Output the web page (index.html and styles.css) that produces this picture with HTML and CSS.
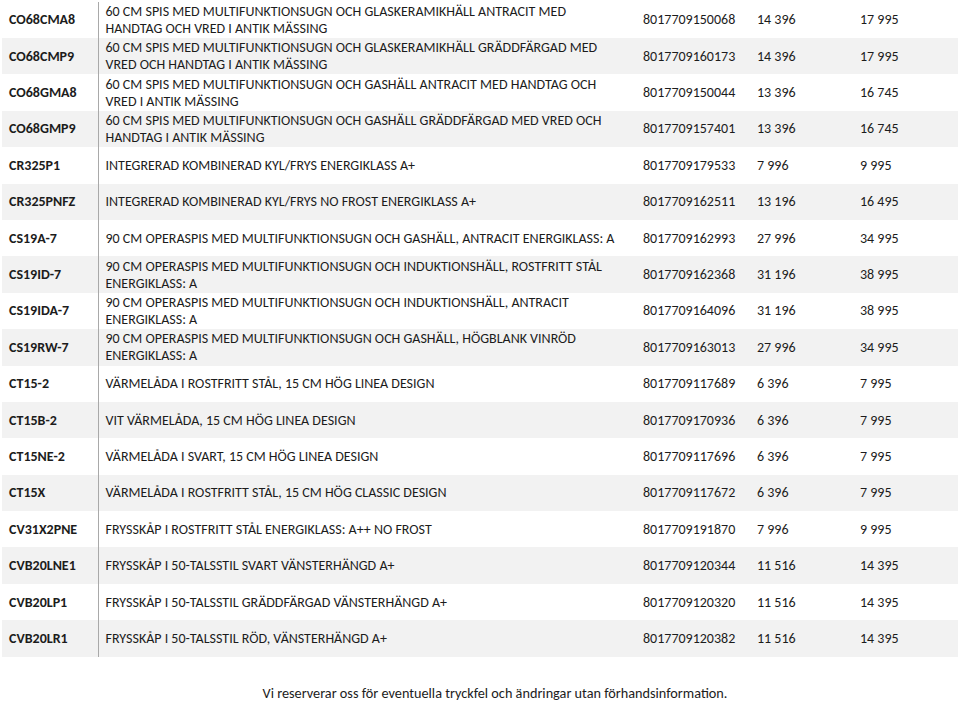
FILE: index.html
```html
<!DOCTYPE html>
<html lang="sv">
<head>
<meta charset="utf-8">
<title>Prislista</title>
<link rel="stylesheet" href="styles.css">
</head>
<body>
<div class="page">
<table class="list">
<colgroup>
<col class="c-code"><col class="c-desc"><col class="c-ean"><col class="c-cost"><col class="c-price">
</colgroup>
<tbody>
<tr><td class="code">CO68CMA8</td><td class="desc">60 CM SPIS MED MULTIFUNKTIONSUGN OCH GLASKERAMIKHÄLL ANTRACIT MED<br>HANDTAG OCH VRED I ANTIK MÄSSING</td><td>8017709150068</td><td>14 396</td><td>17 995</td></tr>
<tr><td class="code">CO68CMP9</td><td class="desc">60 CM SPIS MED MULTIFUNKTIONSUGN OCH GLASKERAMIKHÄLL GRÄDDFÄRGAD MED<br>VRED OCH HANDTAG I ANTIK MÄSSING</td><td>8017709160173</td><td>14 396</td><td>17 995</td></tr>
<tr><td class="code">CO68GMA8</td><td class="desc">60 CM SPIS MED MULTIFUNKTIONSUGN OCH GASHÄLL ANTRACIT MED HANDTAG OCH<br>VRED I ANTIK MÄSSING</td><td>8017709150044</td><td>13 396</td><td>16 745</td></tr>
<tr><td class="code">CO68GMP9</td><td class="desc">60 CM SPIS MED MULTIFUNKTIONSUGN OCH GASHÄLL GRÄDDFÄRGAD MED VRED OCH<br>HANDTAG I ANTIK MÄSSING</td><td>8017709157401</td><td>13 396</td><td>16 745</td></tr>
<tr><td class="code">CR325P1</td><td class="desc">INTEGRERAD KOMBINERAD KYL/FRYS ENERGIKLASS A+</td><td>8017709179533</td><td>7 996</td><td>9 995</td></tr>
<tr><td class="code">CR325PNFZ</td><td class="desc">INTEGRERAD KOMBINERAD KYL/FRYS NO FROST ENERGIKLASS A+</td><td>8017709162511</td><td>13 196</td><td>16 495</td></tr>
<tr><td class="code">CS19A-7</td><td class="desc">90 CM OPERASPIS MED MULTIFUNKTIONSUGN OCH GASHÄLL, ANTRACIT ENERGIKLASS: A</td><td>8017709162993</td><td>27 996</td><td>34 995</td></tr>
<tr><td class="code">CS19ID-7</td><td class="desc">90 CM OPERASPIS MED MULTIFUNKTIONSUGN OCH INDUKTIONSHÄLL, ROSTFRITT STÅL<br>ENERGIKLASS: A</td><td>8017709162368</td><td>31 196</td><td>38 995</td></tr>
<tr><td class="code">CS19IDA-7</td><td class="desc">90 CM OPERASPIS MED MULTIFUNKTIONSUGN OCH INDUKTIONSHÄLL, ANTRACIT<br>ENERGIKLASS: A</td><td>8017709164096</td><td>31 196</td><td>38 995</td></tr>
<tr><td class="code">CS19RW-7</td><td class="desc">90 CM OPERASPIS MED MULTIFUNKTIONSUGN OCH GASHÄLL, HÖGBLANK VINRÖD<br>ENERGIKLASS: A</td><td>8017709163013</td><td>27 996</td><td>34 995</td></tr>
<tr><td class="code">CT15-2</td><td class="desc">VÄRMELÅDA I ROSTFRITT STÅL, 15 CM HÖG LINEA DESIGN</td><td>8017709117689</td><td>6 396</td><td>7 995</td></tr>
<tr><td class="code">CT15B-2</td><td class="desc">VIT VÄRMELÅDA, 15 CM HÖG LINEA DESIGN</td><td>8017709170936</td><td>6 396</td><td>7 995</td></tr>
<tr><td class="code">CT15NE-2</td><td class="desc">VÄRMELÅDA I SVART, 15 CM HÖG LINEA DESIGN</td><td>8017709117696</td><td>6 396</td><td>7 995</td></tr>
<tr><td class="code">CT15X</td><td class="desc">VÄRMELÅDA I ROSTFRITT STÅL, 15 CM HÖG CLASSIC DESIGN</td><td>8017709117672</td><td>6 396</td><td>7 995</td></tr>
<tr><td class="code">CV31X2PNE</td><td class="desc">FRYSSKÅP I ROSTFRITT STÅL ENERGIKLASS: A++ NO FROST</td><td>8017709191870</td><td>7 996</td><td>9 995</td></tr>
<tr><td class="code">CVB20LNE1</td><td class="desc">FRYSSKÅP I 50-TALSSTIL SVART VÄNSTERHÄNGD A+</td><td>8017709120344</td><td>11 516</td><td>14 395</td></tr>
<tr><td class="code">CVB20LP1</td><td class="desc">FRYSSKÅP I 50-TALSSTIL GRÄDDFÄRGAD VÄNSTERHÄNGD A+</td><td>8017709120320</td><td>11 516</td><td>14 395</td></tr>
<tr><td class="code">CVB20LR1</td><td class="desc">FRYSSKÅP I 50-TALSSTIL RÖD, VÄNSTERHÄNGD A+</td><td>8017709120382</td><td>11 516</td><td>14 395</td></tr>
</tbody>
</table>
<p class="note">Vi reserverar oss för eventuella tryckfel och ändringar utan förhandsinformation.</p>
</div>
</body>
</html>
```
FILE: styles.css
```css
html, body {
  margin: 0;
  padding: 0;
  background: #ffffff;
}
body {
  font-family: Carlito, Lato, "Liberation Sans", sans-serif;
  color: #1c1c1c;
  font-size: 14px;
}
.page {
  padding: 1.6px 2px 0 2px;
}
.list {
  width: 956px;
  border-collapse: collapse;
  table-layout: fixed;
}
.c-code { width: 96px; }
.c-desc { width: 538px; }
.c-ean { width: 114px; }
.c-cost { width: 103px; }
.c-price { width: 105px; }
.list td {
  height: 36.4px;
  padding: 0 0 0 7px;
  vertical-align: middle;
  white-space: nowrap;
  line-height: 17px;
  box-sizing: border-box;
}
.list td.code {
  font-weight: 700;
  border-right: 1px solid #a9a9a9;
}
.list tr:nth-child(even) td {
  background: #f2f2f2;
}
.note {
  margin: 28px 0 0 0;
  text-align: center;
  font-size: 14.25px;
  line-height: 17px;
  padding-left: 30px;
}
```
